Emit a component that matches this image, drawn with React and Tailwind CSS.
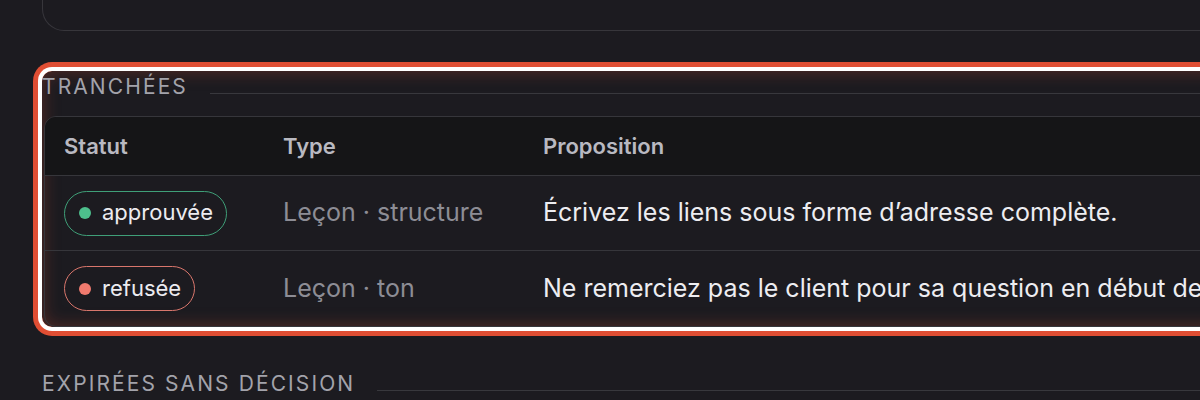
import React from 'react';

const rows = [
  {
    status: 'approuvée',
    tone: 'ok',
    type: 'Leçon · structure',
    text: 'Écrivez les liens sous forme d’adresse complète.',
  },
  {
    status: 'refusée',
    tone: 'ko',
    type: 'Leçon · ton',
    text: 'Ne remerciez pas le client pour sa question en début de réponse.',
  },
];

const StatusPill = ({ label, tone }) => (
  <span
    className={`inline-flex items-center gap-[11px] h-[45px] pl-[14px] pr-[13px] rounded-full border-[1.5px] ${
      tone === 'ok' ? 'border-[#3f9f78]' : 'border-[#d9766c]'
    }`}
  >
    <span className={`w-[12px] h-[12px] rounded-full ${tone === 'ok' ? 'bg-[#4dbf8c]' : 'bg-[#f07a6e]'}`} />
    <span className="text-[22px] text-[#ececf0] leading-none pb-[2px]">{label}</span>
  </span>
);

const SectionTitle = ({ children }) => (
  <div className="flex items-end h-[32px] gap-[22px]">
    <span className="text-[21px] tracking-[0.1em] uppercase text-[#a3a3ab] leading-[32px] whitespace-nowrap">
      {children}
    </span>
    <span className="flex-1 h-px bg-[#38383d] mb-[9px]" />
  </div>
);

export default function App() {
  return (
    <div className="h-[400px] overflow-hidden bg-[#1c1b20] font-['Inter',sans-serif]">
      <div className="w-[1400px] pl-[42px]">
        {/* previous card, only its bottom is visible */}
        <div className="h-[31px] rounded-b-[22px] border-x border-b border-[#37363b]" />

        {/* highlighted section */}
        <div className="mt-[40px] rounded-[10px] shadow-[0_0_0_4px_#ffffff,0_0_0_9px_#e04e33,inset_0_0_18px_rgba(210,75,50,0.35)]">
          <SectionTitle>Tranchées</SectionTitle>
          <div className="mt-[13px] ml-[2px] mb-[1px] rounded-[12px] border border-[#36363b] overflow-hidden">
            <div className="grid grid-cols-[219px_260px_1fr] h-[59px] items-center bg-[#151517] border-b border-[#36363b] text-[22px] font-semibold text-[#b9b9c1]">
              <div className="px-[19px]">Statut</div>
              <div className="px-[19px]">Type</div>
              <div className="px-[19px]">Proposition</div>
            </div>
            {rows.map((r, i) => (
              <div
                key={r.status}
                className={`grid grid-cols-[219px_260px_1fr] h-[75px] items-center ${
                  i < rows.length - 1 ? 'border-b border-[#36363b]' : ''
                }`}
              >
                <div className="px-[19px]">
                  <StatusPill label={r.status} tone={r.tone} />
                </div>
                <div className="px-[19px] text-[25px] text-[#8d8d95] whitespace-nowrap">{r.type}</div>
                <div className="px-[19px] text-[25px] text-[#ededf1] whitespace-nowrap">{r.text}</div>
              </div>
            ))}
          </div>
        </div>

        <div className="mt-[41px]">
          <SectionTitle>Expirées sans décision</SectionTitle>
        </div>
      </div>
    </div>
  );
}
